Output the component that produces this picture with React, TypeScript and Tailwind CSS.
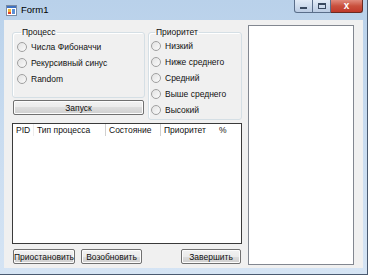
import React from "react";

function Radio({ label }: { label: string }) {
  return (
    <div className="flex items-center h-[16px] gap-[4px]">
      <span className="w-[10px] h-[10px] rounded-full border border-[#a0a0a0] bg-gradient-to-br from-[#e2e2e2] to-[#fbfbfb] shrink-0" />
      <span className="leading-[10px] whitespace-nowrap">{label}</span>
    </div>
  );
}

function Btn({ label, w }: { label: string; w: string }) {
  return (
    <div
      className={`${w} h-[15px] rounded-[2px] border border-[#707070] bg-[linear-gradient(#f2f2f2_0%,#ebebeb_50%,#dddddd_50%,#cfcfcf_100%)] flex items-center justify-center leading-[10px] shadow-[inset_0_0_0_1px_#fcfcfc]`}
    >
      {label}
    </div>
  );
}

export default function App() {
  return (
    <div className="w-[369px] h-[276px] bg-white overflow-hidden font-['Liberation_Sans',Arial,sans-serif] text-[8.5px] text-[#111111]">
      <div className="w-[368px] h-[275px] flex flex-col bg-gradient-to-b from-[#b9d1ea] via-[#c9dcf0] to-[#d5e4f4] border-r border-b border-[#4a5a70] relative">
        {/* Title bar */}
        <div className="h-[20px] flex items-center pl-[6px] gap-[4px] shrink-0">
          <svg width="11" height="11" viewBox="0 0 11 11">
            <rect x="0.5" y="0.5" width="10" height="10" fill="#ffffff" stroke="#7a8ba3" />
            <rect x="1" y="1" width="9" height="2" fill="#3f72c0" />
            <rect x="2" y="4" width="3" height="3" fill="#f2b632" />
            <rect x="2" y="7" width="3" height="2" fill="#e0432f" />
            <rect x="6" y="4" width="3" height="5" fill="#5b8fd6" />
          </svg>
          <span className="text-[9.5px] leading-[10px] text-black">Form1</span>
        </div>
        {/* Caption buttons (overlay) */}
        <div className="absolute top-0 right-[4px] flex">
          <div className="w-[19px] h-[13px] border border-[#5a6e8a] border-t-0 rounded-bl-[3px] bg-gradient-to-b from-[#e3ecf7] to-[#bccde4] flex items-end justify-center pb-[3px]">
            <span className="w-[7px] h-[2px] bg-[#3a4a60]" />
          </div>
          <div className="w-[18px] h-[13px] border-b border-r border-[#5a6e8a] bg-gradient-to-b from-[#e3ecf7] to-[#bccde4] flex items-center justify-center">
            <span className="w-[8px] h-[6px] border border-[#3a4a60] border-t-2" />
          </div>
          <div className="w-[32px] h-[13px] border-b border-r border-[#6b2a22] rounded-br-[3px] bg-gradient-to-b from-[#e08a7c] via-[#c9503d] to-[#c0392b] flex items-center justify-center">
            <span className="text-white text-[10px] leading-[10px] font-bold">x</span>
          </div>
        </div>
        {/* Client area */}
        <div className="ml-[4px] w-[359px] h-[248px] bg-[#f0f0f0] flex shrink-0">
          <div className="ml-[8px] w-[230px] pt-[7px] flex flex-col">
            <div className="flex gap-[3px] items-start">
              <div className="w-[133px] flex flex-col">
                <fieldset className="h-[71px] border border-[#d5dfe5] rounded-[3px] pl-[4px] pt-[2px] shadow-[inset_1px_1px_0_#ffffff]">
                  <legend className="ml-[4px] px-[1px] leading-[10px]">Процесс</legend>
                  <Radio label="Числа Фибоначчи" />
                  <Radio label="Рекурсивный синус" />
                  <Radio label="Random" />
                </fieldset>
                <div className="mt-[2px] mx-[1px]">
                  <Btn label="Запуск" w="w-[131px]" />
                </div>
              </div>
              <fieldset className="w-[94px] h-[93px] border border-[#d5dfe5] rounded-[3px] pl-[2px] pt-[1px] shadow-[inset_1px_1px_0_#ffffff]">
                <legend className="ml-[4px] px-[1px] leading-[10px]">Приоритет</legend>
                <Radio label="Низкий" />
                <Radio label="Ниже среднего" />
                <Radio label="Средний" />
                <Radio label="Выше среднего" />
                <Radio label="Высокий" />
              </fieldset>
            </div>
            {/* List view */}
            <div className="mt-[3px] h-[121px] border border-[#3a3a3a] bg-white flex flex-col">
              <div className="h-[12px] flex items-center leading-[10px]">
                <div className="w-[21px] pl-[3px] h-full flex items-center border-r border-[#ececec]">PID</div>
                <div className="w-[72px] pl-[3px] h-full flex items-center border-r border-[#d0d0d0]">Тип процесса</div>
                <div className="w-[55px] pl-[3px] h-full flex items-center border-r border-[#d0d0d0]">Состояние</div>
                <div className="w-[54px] pl-[3px] h-full flex items-center">Приоритет</div>
                <div className="pl-[4px] h-full flex items-center">%</div>
              </div>
            </div>
            {/* Bottom buttons */}
            <div className="mt-[5px] flex">
              <div className="ml-[1px]">
                <Btn label="Приостановить" w="w-[62px]" />
              </div>
              <div className="ml-[6px]">
                <Btn label="Возобновить" w="w-[61px]" />
              </div>
              <div className="ml-auto mr-[1px]">
                <Btn label="Завершить" w="w-[60px]" />
              </div>
            </div>
          </div>
          <div className="ml-[6px] mt-[5px] w-[106px] h-[240px] border border-[#828790] bg-white" />
        </div>
      </div>
    </div>
  );
}
